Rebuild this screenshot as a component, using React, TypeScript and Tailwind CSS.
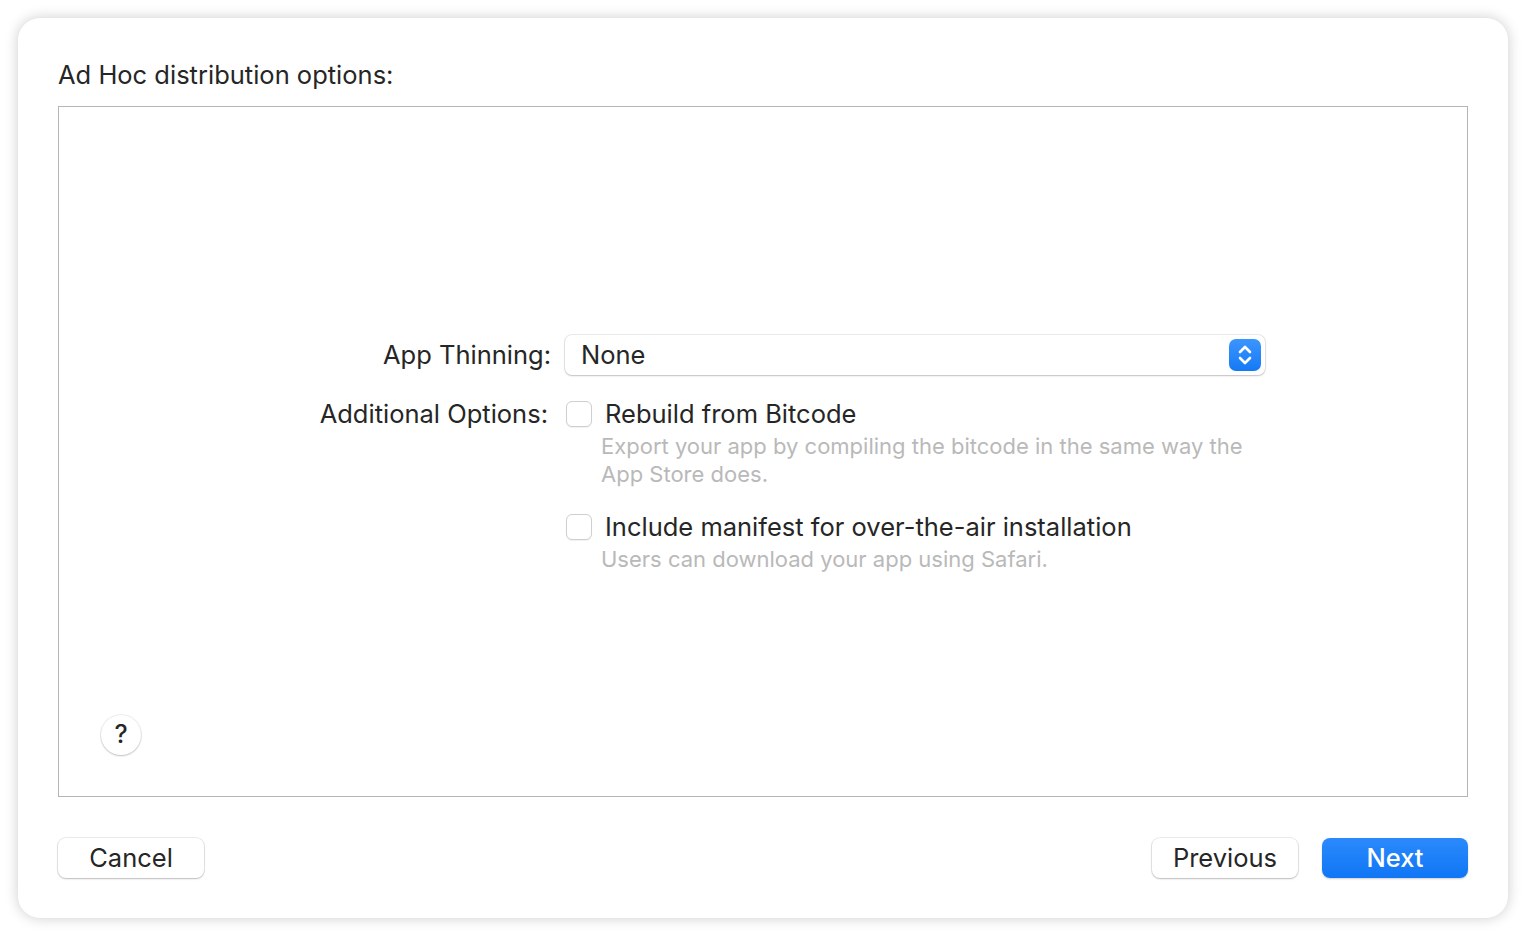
function Checkbox() {
  return (
    <span className="mt-[1px] block h-[26px] w-[26px] shrink-0 rounded-[6px] border border-[#cfcfcf] bg-white shadow-[0_1px_1px_rgba(0,0,0,0.06)]" />
  );
}

function Stepper() {
  return (
    <span className="flex h-[32px] w-[32px] items-center justify-center rounded-[7px] bg-gradient-to-b from-[#3b95fd] to-[#1279f5]">
      <svg width="16" height="22" viewBox="0 0 16 22" fill="none" stroke="white" strokeWidth="2.6" strokeLinecap="round" strokeLinejoin="round">
        <path d="M3 8 L8 3 L13 8" />
        <path d="M3 14 L8 19 L13 14" />
      </svg>
    </span>
  );
}

function Option({ title, desc }: { title: string; desc: string[] }) {
  return (
    <div className="flex flex-col">
      <div className="flex items-start gap-[13px]">
        <Checkbox />
        <span className="text-[25.5px] leading-[28px] text-[#262626]">{title}</span>
      </div>
      <div className="mt-[4px] pl-[35px] text-[22px] leading-[28px] text-[#b9b9b9]">
        {desc.map((line) => (
          <div key={line}>{line}</div>
        ))}
      </div>
    </div>
  );
}

const whiteBtn =
  "h-[40px] w-[146px] rounded-[8px] bg-white text-[25.5px] text-[#262626] shadow-[0_0_0_1px_rgba(0,0,0,0.08),0_1px_2px_rgba(0,0,0,0.2)]";

export default function App() {
  return (
    <div
      className="h-[936px] w-full bg-white p-[18px]"
      style={{ fontFamily: "Inter, 'Noto Sans', sans-serif" }}
    >
      <div className="flex h-[900px] w-[1490px] flex-col rounded-[22px] bg-white px-[40px] pb-[40px] pt-[43px] shadow-[0_0_14px_rgba(0,0,0,0.2)]">
        {/* Header */}
        <div className="text-[25.5px] leading-[28px] text-[#262626]">Ad Hoc distribution options:</div>

        {/* Options panel */}
        <div className="mt-[17px] flex h-[691px] flex-col border-[1.5px] border-[#b5b5b5]">
          <div className="flex flex-1 items-center pt-[86px]">
            <div className="ml-[259px] grid grid-cols-[233px_700px] gap-x-[14px] gap-y-[25px]">
              <div className="flex h-[40px] items-center justify-end text-[25.5px] text-[#262626]">App Thinning:</div>
              <div className="flex h-[40px] items-center justify-between rounded-[7px] bg-white pl-[16px] pr-[4px] shadow-[0_0_0_1px_rgba(0,0,0,0.08),0_1px_2px_rgba(0,0,0,0.18)]">
                <span className="text-[25.5px] text-[#262626]">None</span>
                <Stepper />
              </div>

              <div className="flex justify-end pr-[3px] text-[25.5px] leading-[28px] text-[#262626]">Additional Options:</div>
              <div className="flex flex-col gap-[25px] pl-[1px]">
                <Option
                  title="Rebuild from Bitcode"
                  desc={["Export your app by compiling the bitcode in the same way the", "App Store does."]}
                />
                <Option title="Include manifest for over-the-air installation" desc={["Users can download your app using Safari."]} />
              </div>
            </div>
          </div>
          <div className="pb-[41px] pl-[42px]">
            <button className="flex h-[40px] w-[40px] items-center justify-center rounded-full bg-white text-[25px] font-medium text-[#262626] shadow-[0_0_0_1px_rgba(0,0,0,0.06),0_1px_2px_rgba(0,0,0,0.2)]">
              ?
            </button>
          </div>
        </div>

        {/* Footer */}
        <div className="mt-auto flex items-center">
          <button className={whiteBtn}>Cancel</button>
          <div className="ml-auto flex gap-[24px]">
            <button className={whiteBtn}>Previous</button>
            <button className="h-[40px] w-[146px] rounded-[8px] bg-gradient-to-b from-[#2a8afc] to-[#0f76f5] text-[25.5px] font-medium text-white shadow-[0_1px_2px_rgba(0,0,0,0.2)]">
              Next
            </button>
          </div>
        </div>
      </div>
    </div>
  );
}
